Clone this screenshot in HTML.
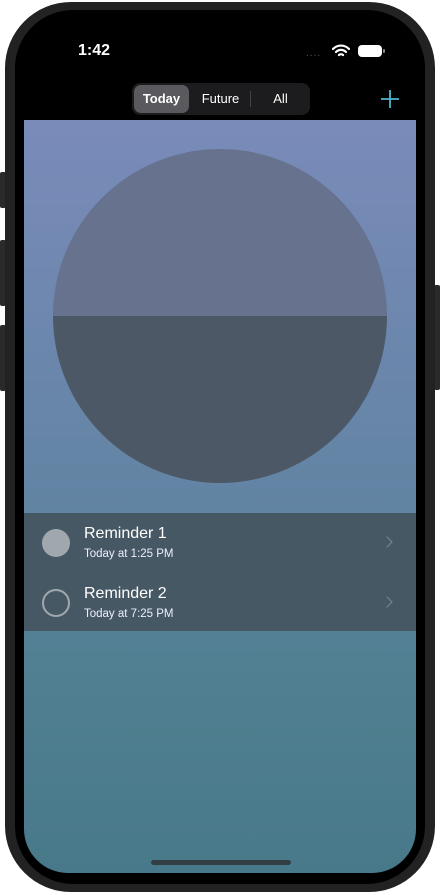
<!DOCTYPE html>
<html><head><meta charset="utf-8"><style>
*{margin:0;padding:0;box-sizing:border-box}
body{width:440px;height:895px;background:#fff;position:relative;overflow:hidden;font-family:"Liberation Sans",sans-serif}
.btn{position:absolute;background:#2a2a2a;border-radius:2px}
.phone{position:absolute;left:5px;top:2px;width:430px;height:890px;border-radius:66px;background:#222;}
.inner{position:absolute;left:10px;top:8px;width:410px;height:874px;border-radius:58px;background:#000;overflow:hidden}
.screen{position:absolute;left:9px;top:110px;width:392px;height:753px;border-radius:0 0 44px 44px;overflow:hidden;
background:linear-gradient(#7a8bba 0%,#6284a3 50%,#4f7f90 75%,#48798a 100%)}
.circ{position:absolute;left:29px;top:29px;width:334px;height:334px;border-radius:50%;overflow:hidden}
.circ .t{height:167px;background:#66728e}.circ .b{height:167px;background:#4d5866}
.list{position:absolute;left:0;top:393px;width:392px;height:118px;background:#475865}
.row{position:absolute;left:0;width:392px;height:59px;color:#fff}
.row .c{position:absolute;left:18px;top:16px;width:28px;height:28px;border-radius:50%}
.row .n{position:absolute;left:60px;top:12px;font-size:16px}
.row .s{position:absolute;left:60px;top:35px;font-size:11.5px;color:#eef}
.row .ch{position:absolute;left:359px;top:25px;width:8px;height:8px;border-right:1.5px solid #7c8891;border-top:1.5px solid #7c8891;transform:rotate(45deg)}
</style></head><body>
<div class="btn" style="left:0;top:172px;width:6px;height:36px"></div>
<div class="btn" style="left:0;top:240px;width:6px;height:66px"></div>
<div class="btn" style="left:0;top:325px;width:6px;height:66px"></div>
<div class="btn" style="left:434px;top:285px;width:6px;height:105px"></div>
<div class="phone"><div class="inner">
<div style="position:absolute;left:63px;top:32px;color:#fff;font-size:16px;font-weight:bold">1:42</div>
<div style="position:absolute;left:291px;top:38px;color:#555;font-size:10px;letter-spacing:1px">....</div>
<svg style="position:absolute;left:317px;top:34px" width="18" height="14" viewBox="0 0 18 14"><path d="M1 5a11 11 0 0 1 16 0M4 8a7 7 0 0 1 10 0M7 11a3 3 0 0 1 4 0" stroke="#fff" stroke-width="2.2" fill="none" stroke-linecap="round"/></svg>
<div style="position:absolute;left:343px;top:35px;width:24px;height:12px;border-radius:4px;background:#fff"></div>
<div style="position:absolute;left:368px;top:39px;width:2px;height:4px;background:#888;border-radius:1px"></div>
<div style="position:absolute;left:117px;top:73px;width:178px;height:32px;border-radius:8px;background:#1c1c1e"></div>
<div style="position:absolute;left:119px;top:75px;width:55px;height:28px;border-radius:7px;background:#5a5a5e"></div>
<div style="position:absolute;left:235px;top:81px;width:1px;height:16px;background:#444"></div>
<div style="position:absolute;left:119px;top:81px;width:55px;text-align:center;color:#fff;font-size:13px;font-weight:bold">Today</div>
<div style="position:absolute;left:178px;top:81px;width:55px;text-align:center;color:#fff;font-size:13px">Future</div>
<div style="position:absolute;left:238px;top:81px;width:55px;text-align:center;color:#fff;font-size:13px">All</div>
<svg style="position:absolute;left:365px;top:79px" width="20" height="20"><path d="M10 1v18M1 10h18" stroke="#4fb5d0" stroke-width="1.8"/></svg>
<div class="screen">
<div class="circ"><div class="t"></div><div class="b"></div></div>
<div class="list">
<div class="row" style="top:0"><div class="c" style="background:#a0a8ae"></div><div class="n">Reminder 1</div><div class="s">Today at 1:25 PM</div><div class="ch"></div></div>
<div class="row" style="top:60px"><div class="c" style="border:2px solid #a0a8ae"></div><div class="n">Reminder 2</div><div class="s">Today at 7:25 PM</div><div class="ch"></div></div>
</div>
<div style="position:absolute;left:127px;top:740px;width:140px;height:5px;border-radius:3px;background:#333d44"></div>
</div>
</div></div>
</body></html>
